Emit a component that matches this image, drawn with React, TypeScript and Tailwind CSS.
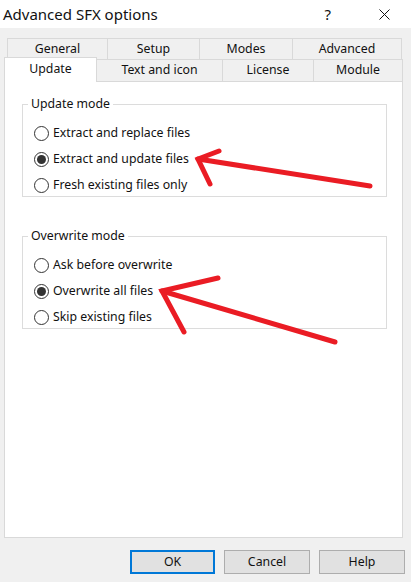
const rowOne = [
  { label: "General", w: "w-[100px]" },
  { label: "Setup", w: "w-[92px]" },
  { label: "Modes", w: "w-[93px]" },
  { label: "Advanced", w: "w-[110px]" },
];

const rowTwo = [
  { label: "Text and icon", w: "w-[125px]" },
  { label: "License", w: "w-[91px]" },
  { label: "Module", w: "w-[90px]" },
];

function Radio({ label, checked }: { label: string; checked?: boolean }) {
  return (
    <label className="flex h-[26px] items-center gap-[4px]">
      <span className="flex h-[15px] w-[15px] items-center justify-center rounded-full border border-[#333333] bg-white">
        {checked && <span className="h-[9px] w-[9px] rounded-full bg-[#333333]" />}
      </span>
      <span>{label}</span>
    </label>
  );
}

function Group({
  title,
  options,
  selected,
}: {
  title: string;
  options: string[];
  selected: number;
}) {
  return (
    <fieldset className="h-[101px] border border-[#dcdcdc]">
      <legend className="ml-[5px] px-[3px] leading-[16px]">{title}</legend>
      <div className="pl-[11px] pt-[8px]">
        {options.map((o, i) => (
          <Radio key={o} label={o} checked={i === selected} />
        ))}
      </div>
    </fieldset>
  );
}

export default function App() {
  return (
    <div className="relative h-[582px] w-[411px] overflow-hidden bg-[#f0f0f0] font-['Noto_Sans',sans-serif] text-[12.3px] text-[#111]">
      {/* title bar */}
      <div className="flex h-[28px] items-center bg-white pl-[3px]">
        <span className="text-[15px]">Advanced SFX options</span>
        <span className="ml-auto mr-[48px] text-[15px]">?</span>
        <svg width="11" height="11" viewBox="0 0 11 11" className="mr-[21px]">
          <path d="M0.5 0.5L10.5 10.5M10.5 0.5L0.5 10.5" stroke="#111" strokeWidth="1" />
        </svg>
      </div>

      <div className="pl-[4px] pt-[10px]">
        {/* tabs */}
        <div className="ml-[3px] flex h-[21px]">
          {rowOne.map((t, i) => (
            <div
              key={t.label}
              className={`${t.w} flex items-center justify-center border-l border-t border-[#d9d9d9] ${
                i === rowOne.length - 1 ? "border-r" : ""
              }`}
            >
              {t.label}
            </div>
          ))}
        </div>
        <div className="flex h-[22px] items-end">
          <div className="relative z-10 -mb-px flex h-[25px] w-[93px] items-start justify-center border-l border-r border-t border-[#d9d9d9] bg-white pt-[2px]">
            Update
          </div>
          {rowTwo.map((t, i) => (
            <div
              key={t.label}
              className={`${t.w} flex h-[22px] items-center justify-center border-t border-[#d9d9d9] ${
                i === 0 ? "" : "border-l"
              } ${i === rowTwo.length - 1 ? "border-r" : ""}`}
            >
              {t.label}
            </div>
          ))}
        </div>

        {/* panel */}
        <div className="flex h-[457px] w-[399px] flex-col gap-[31px] border border-[#d9d9d9] bg-white pl-[17px] pr-[15px] pt-[14px]">
          <Group
            title="Update mode"
            options={["Extract and replace files", "Extract and update files", "Fresh existing files only"]}
            selected={1}
          />
          <Group
            title="Overwrite mode"
            options={["Ask before overwrite", "Overwrite all files", "Skip existing files"]}
            selected={1}
          />
        </div>
      </div>

      {/* buttons */}
      <div className="mt-[12px] flex justify-end gap-[9px] pr-[6px]">
        <button className="h-[24px] w-[85px] border-2 border-[#0078d7] bg-[#e1e1e1]">OK</button>
        <button className="h-[24px] w-[86px] border border-[#adadad] bg-[#e1e1e1]">Cancel</button>
        <button className="h-[24px] w-[86px] border border-[#adadad] bg-[#e1e1e1]">Help</button>
      </div>

      {/* red annotation arrows */}
      <svg className="pointer-events-none absolute inset-0" width="411" height="582" viewBox="0 0 411 582">
        <g stroke="#ea1c24" strokeWidth="5" strokeLinecap="round" fill="none">
          <path d="M370 186 L198 159" />
          <path d="M219 151 L198 159 L210 184" />
          <path d="M335 342 L162 291" />
          <path d="M218 278 L162 291 L184 332" />
        </g>
      </svg>
    </div>
  );
}
